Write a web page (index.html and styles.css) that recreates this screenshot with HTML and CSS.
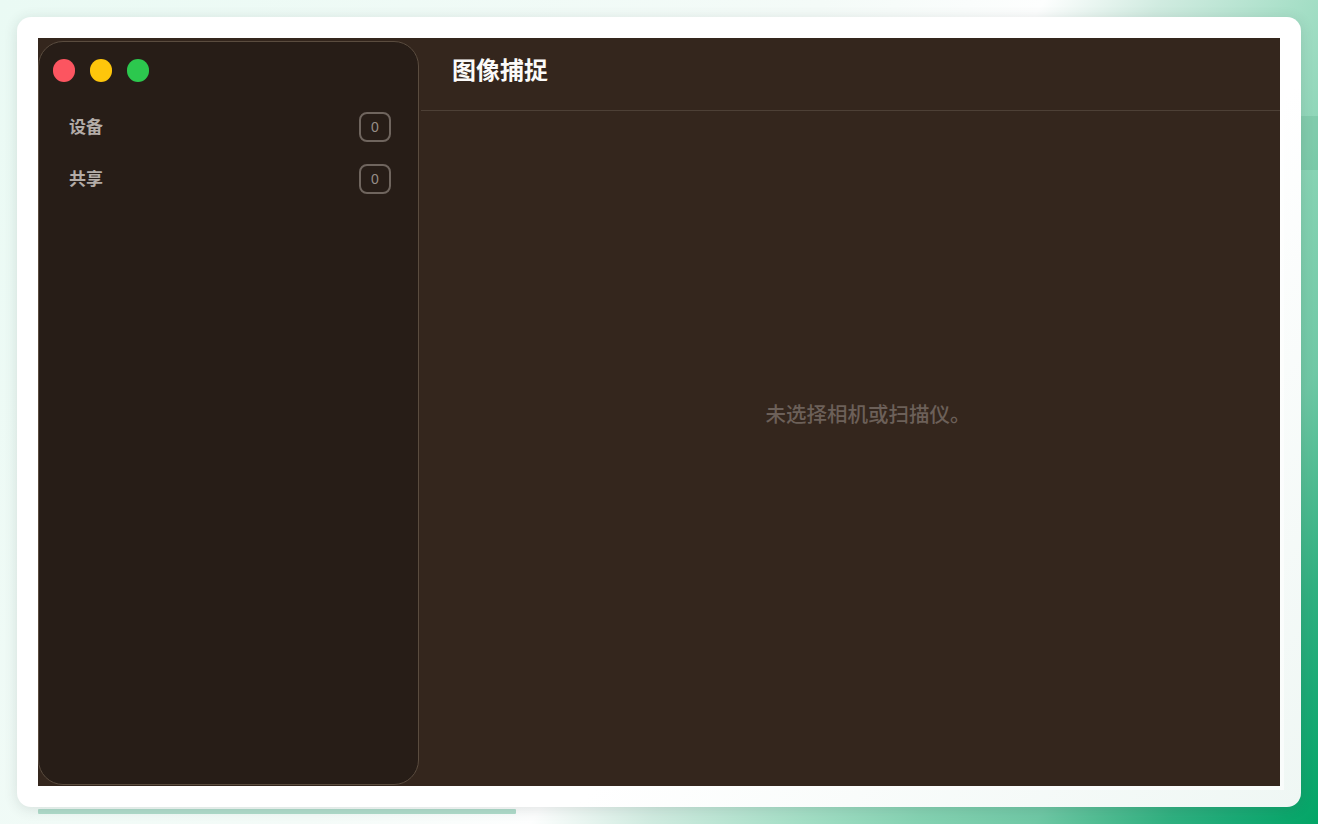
FILE: index.html
```html
<!DOCTYPE html>
<html lang="zh-CN">
<head>
<meta charset="utf-8">
<title>图像捕捉</title>
<link rel="stylesheet" href="styles.css">
</head>
<body>
<div class="band"></div>
<main class="card">
  <div class="app">
    <aside class="sidebar">
      <div class="lights">
        <span class="light red"></span>
        <span class="light yellow"></span>
        <span class="light green"></span>
      </div>
      <div class="row"><span class="label">设备</span><span class="count">0</span></div>
      <div class="row"><span class="label">共享</span><span class="count">0</span></div>
    </aside>
    <section class="content">
      <header class="head"><h1 class="title">图像捕捉</h1></header>
      <div class="empty"><p class="message">未选择相机或扫描仪。</p></div>
    </section>
  </div>
</main>
<div class="scrollbar"></div>
</body>
</html>
```
FILE: styles.css
```css
* { box-sizing: border-box; }
html, body { margin: 0; height: 100%; }
body {
  position: relative;
  width: 1318px;
  height: 824px;
  overflow: hidden;
  padding: 17px 17px 0;
  font-family: "Liberation Sans", "Noto Sans CJK SC", sans-serif;
  background: linear-gradient(122deg, #eafaf4 0%, #f4fbf8 45%, #fdfefe 57%, #d0ebe0 63.4%, #a3dec5 71.8%, #85d2b2 78%, #6fc8a5 84.5%, #50bc92 88%, #30b080 91.7%, #1aaa75 95.3%, #02a566 100%);
}
.band {
  position: absolute;
  right: 0;
  top: 116px;
  width: 30px;
  height: 54px;
  background: rgba(40, 140, 100, 0.14);
}
.card {
  position: relative;
  width: 1284px;
  height: 790px;
  padding: 21px;
  background: #fff;
  background-image: linear-gradient(135deg, #fff 65%, #eff7f4 100%);
  border-radius: 14px;
  box-shadow: 0 2px 14px rgba(40, 60, 60, 0.14);
}
.app {
  display: flex;
  width: 1242px;
  height: 748px;
  padding-top: 3px;
  padding-bottom: 1px;
  background: #34261d;
  box-shadow: 0 0 0 4px rgba(255, 255, 255, 0.6);
}
.sidebar {
  flex: none;
  width: 381px;
  height: 744px;
  background: #271d17;
  border: 1px solid #5a4c3f;
  border-radius: 25px;
  padding: 17px 27px 0 13.5px;
}
.lights {
  display: flex;
  gap: 14.5px;
  height: 23px;
  margin-bottom: 30px;
}
.light {
  width: 22.5px;
  height: 22.5px;
  border-radius: 50%;
}
.red { background: #fc5560; }
.yellow { background: #fec60b; }
.green { background: #2cc84e; }
.row {
  display: flex;
  align-items: center;
  justify-content: space-between;
  height: 30px;
  margin-bottom: 22px;
  padding-left: 16.5px;
}
.label {
  font-size: 17px;
  font-weight: 700;
  color: #b3aca7;
  position: relative;
  top: -2px;
}
.count {
  display: flex;
  align-items: center;
  justify-content: center;
  width: 32px;
  height: 30px;
  border: 2px solid #6f655e;
  border-radius: 8px;
  font-size: 14px;
  color: #968d87;
}
.content {
  flex: 1;
  display: flex;
  flex-direction: column;
  margin-top: -3px;
  margin-bottom: -1px;
  margin-left: 2px;
  min-width: 0;
}
.head {
  flex: none;
  display: flex;
  align-items: center;
  height: 73px;
  padding-left: 31px;
  border-bottom: 1px solid #4d4036;
}
.title {
  margin: 0;
  font-size: 24px;
  font-weight: 700;
  color: #fbfaf9;
  position: relative;
  top: -6px;
}
.empty {
  flex: 1;
  display: flex;
  align-items: center;
  justify-content: center;
  padding-left: 35px;
}
.message {
  margin: 0 0 71px;
  font-size: 20.5px;
  font-weight: 500;
  color: #6c6059;
}
.scrollbar {
  width: 478px;
  height: 5px;
  margin: 2px 0 0 21px;
  background: #b0dccb;
  border-radius: 1px;
}
```
